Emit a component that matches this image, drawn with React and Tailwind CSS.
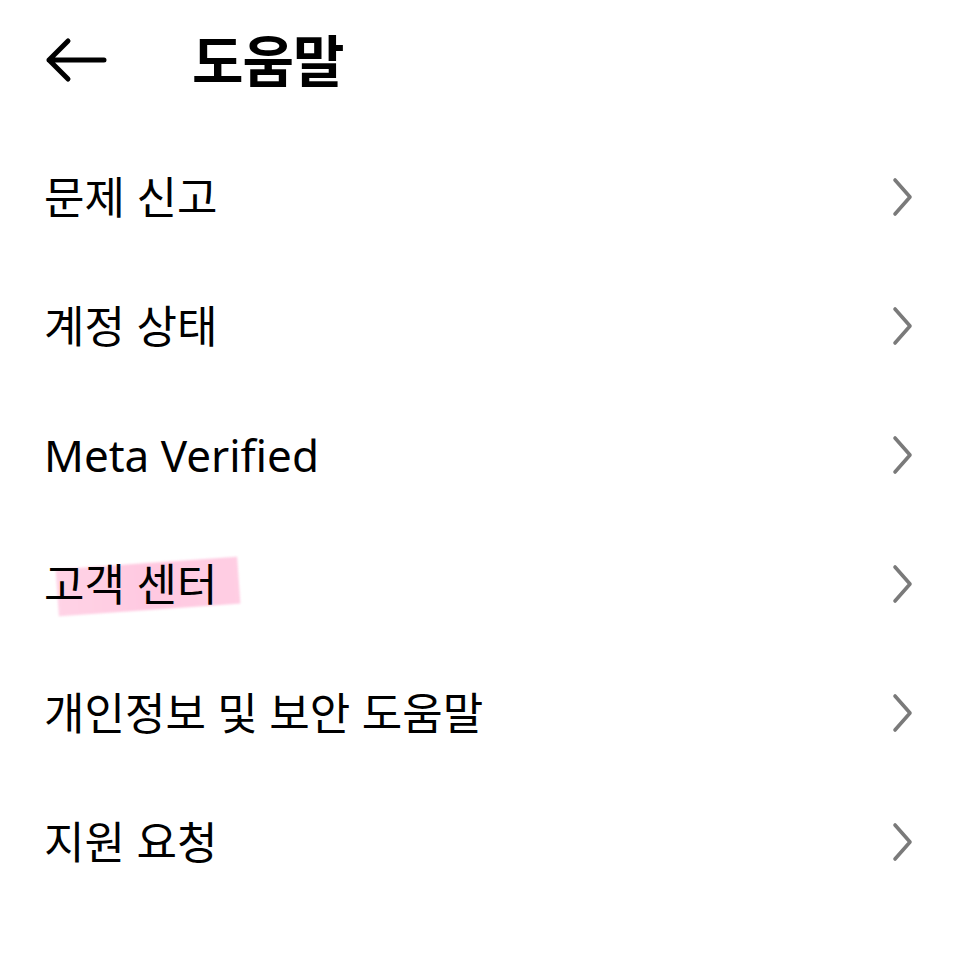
import React from 'react';

const items = ['문제 신고', '계정 상태', 'Meta Verified', '고객 센터', '개인정보 및 보안 도움말', '지원 요청'];

const Chevron = () => (
  <svg width="24" height="40" viewBox="0 0 24 40" fill="none" className="shrink-0">
    <path d="M5 3 L20 20 L5 37" stroke="#7a7a7a" strokeWidth="3.6" strokeLinecap="round" strokeLinejoin="round" />
  </svg>
);

export default function App() {
  return (
    <div
      className="w-[966px] h-[960px] bg-white text-black"
      style={{ fontFamily: '"Noto Sans", "Noto Sans CJK KR", sans-serif' }}
    >
      <div className="flex items-center h-[120px] pl-[44px]">
        <svg width="64" height="48" viewBox="0 0 64 48" fill="none">
          <path d="M60 24 H5 M24 5 L5 24 L24 43" stroke="#000" strokeWidth="5" strokeLinecap="round" strokeLinejoin="round" />
        </svg>
        <h1 className="ml-[84px] text-[56px] font-bold tracking-[-1px]">도움말</h1>
      </div>

      <ul className="pt-[12px]">
        {items.map((t, i) => (
          <li key={t} className="flex items-center justify-between h-[129px] pl-[44px] pr-[52px]">
            <span className="relative text-[44px] leading-none">
              {i === 3 && (
                <span className="absolute left-[13px] top-[1px] w-[182px] h-[47px] bg-gradient-to-r from-[#ffcfe4] via-[#ffc4de] to-[#ffc9e1] opacity-90 -rotate-[4deg] blur-[1px]"></span>
              )}
              <span className="relative">{t}</span>
            </span>
            <Chevron />
          </li>
        ))}
      </ul>
    </div>
  );
}
